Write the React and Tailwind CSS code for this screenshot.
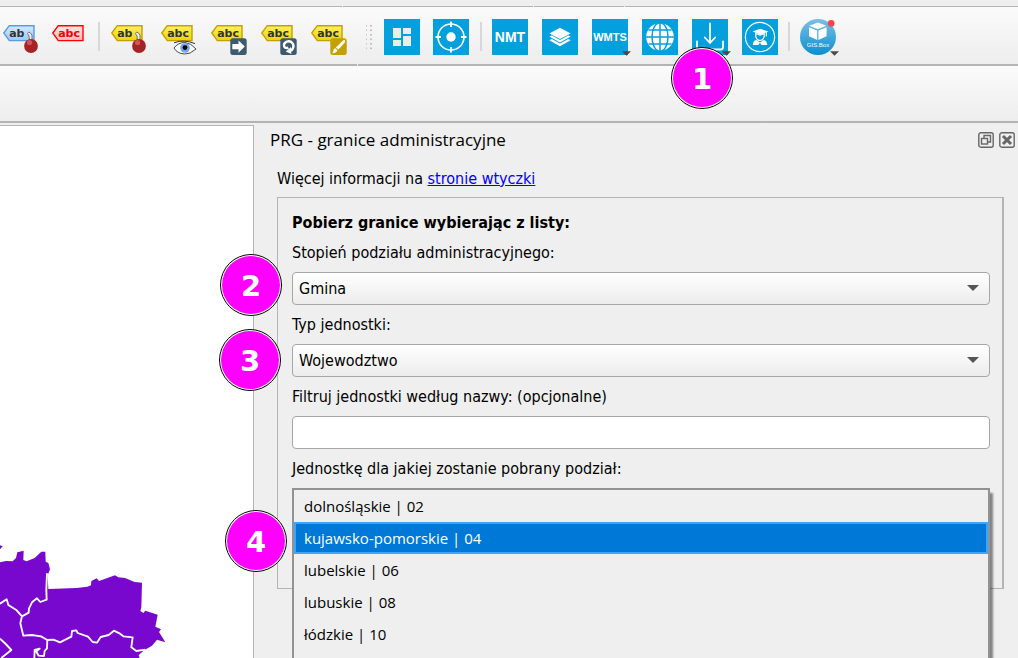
import React, { useState } from "react";

const UNITS = [
  "dolnośląskie | 02",
  "kujawsko-pomorskie | 04",
  "lubelskie | 06",
  "lubuskie | 08",
  "łódzkie | 10",
];

const TAG_COLORS = {
  blue: { stroke: "#5a9ae6", from: "#d6e9fd", to: "#9cc8f8", text: "#2e3436" },
  red: { stroke: "#ff0000", from: "#ffe9e9", to: "#ffb8b8", text: "#f00000" },
  yellow: { stroke: "#c4a000", from: "#fcf06a", to: "#ecd400", text: "#2e3436" },
};

function StepBadge({ number, className }) {
  return (
    <span
      className={`pointer-events-none absolute z-20 flex h-[62px] w-[62px] items-center justify-center rounded-full border border-black bg-white p-px ${className}`}
    >
      <span className="flex h-full w-full items-center justify-center rounded-full bg-[#ff00ff] pt-[2px] font-['DejaVu_Sans',sans-serif] text-[29px] leading-none font-bold text-white">
        {number}
      </span>
    </span>
  );
}

function Separator() {
  return <div className="mx-[10px] mt-[3px] h-[29px] w-[2px] bg-[#d8d8d8]" />;
}

function LabelTag({ color = "yellow", text = "abc", children }) {
  const c = TAG_COLORS[color];
  const id = `tag-${color}`;
  return (
    <svg viewBox="0 0 37 37" className="h-[37px] w-[37px]">
      <defs>
        <linearGradient id={id} x1="0" y1="0" x2="0" y2="1">
          <stop offset="0" stopColor={c.from} />
          <stop offset="1" stopColor={c.to} />
        </linearGradient>
      </defs>
      <path
        d="M1.8 14 L7.3 6.7 H32 V21.6 H7.3 Z"
        fill={`url(#${id})`}
        stroke={c.stroke}
        strokeWidth="1.4"
      />
      <text
        x="7.2"
        y="18.4"
        fontFamily="DejaVu Sans, sans-serif"
        fontSize="11"
        fontWeight="bold"
        fill={c.text}
      >
        {text}
      </text>
      {children}
    </svg>
  );
}

function Pin() {
  return (
    <>
      <path
        d="M25.5 14.5 Q26 12.5 28 13.5 L30 16 V22 H27.5 L27 17 Z"
        fill="#eeeeec"
        stroke="#555753"
        strokeWidth="0.8"
      />
      <circle cx="29" cy="27" r="6.9" fill="#a52225" />
      <circle cx="27.5" cy="23.5" r="2.6" fill="#d0555a" />
    </>
  );
}

function Eye() {
  return (
    <>
      <path
        d="M14 29 Q18 23.5 25 23.5 Q31 24 36 30 Q30 35.5 24.5 35 Q17 34.5 14 29 Z"
        fill="#fff"
        stroke="#333"
        strokeWidth="0.9"
      />
      <path d="M14 23.8 Q24 20 35 24.6" fill="none" stroke="#333" strokeWidth="1" />
      <circle cx="25" cy="29" r="4.8" fill="#6ea6e8" />
      <circle cx="25" cy="28.6" r="2.4" fill="#000" />
    </>
  );
}

function Corner({ fill, children }) {
  return (
    <>
      <rect x="20.3" y="19.3" width="16.4" height="16.6" rx="2.5" fill={fill} />
      {children}
    </>
  );
}

function MenuArrow({ className }) {
  return (
    <svg viewBox="0 0 10 5" className={`absolute h-[5px] w-[9px] ${className}`}>
      <path d="M0 0 H10 L5 5 Z" fill="#4a4a4a" />
    </svg>
  );
}

function Tile({ label, menu, children }) {
  return (
    <button
      type="button"
      aria-label={label}
      className="relative flex h-9 w-9 items-center justify-center bg-[#049fdd]"
    >
      {children}
      {menu && <MenuArrow className="-right-[3px] -bottom-px" />}
    </button>
  );
}

function TagButton({ label, children }) {
  return (
    <button type="button" aria-label={label} className="h-9 w-9">
      {children}
    </button>
  );
}

function Toolbar() {
  return (
    <div className="flex h-[57px] items-start bg-gradient-to-b from-[#fbfbfb] to-[#ededed] pt-3 pl-[2px]">
      <div className="flex gap-[13px]">
        <TagButton label="Etykiety">
          <LabelTag color="blue" text="ab">
            <Pin />
          </LabelTag>
        </TagButton>
        <TagButton label="Nieumieszczone etykiety">
          <LabelTag color="red" />
        </TagButton>
      </div>

      <div className="ml-px flex">
        <Separator />
      </div>

      <div className="flex gap-[14px]">
        <TagButton label="Przypnij etykiety">
          <LabelTag text="ab">
            <Pin />
          </LabelTag>
        </TagButton>
        <TagButton label="Pokaż etykiety">
          <LabelTag>
            <Eye />
          </LabelTag>
        </TagButton>
        <TagButton label="Przesuń etykietę">
          <LabelTag>
            <Corner fill="#3c5a70">
              <path d="M22.3 25 H28.5 V21.5 L34.8 27.6 L28.5 33.8 V30.3 H22.3 Z" fill="#fff" />
            </Corner>
          </LabelTag>
        </TagButton>
        <TagButton label="Obróć etykietę">
          <LabelTag>
            <Corner fill="#3c5a70">
              <path
                d="M31 31.8 Q34.5 28.5 33 25 Q30.8 21.3 26.8 22.6 Q23.2 24.2 24.2 27.5 Q25.5 30 28.3 28.6"
                fill="none"
                stroke="#fff"
                strokeWidth="2.4"
              />
              <path d="M25.8 32.5 L31 28 L31.4 35 Z" fill="#fff" />
            </Corner>
          </LabelTag>
        </TagButton>
        <TagButton label="Zmień właściwości etykiety">
          <LabelTag>
            <Corner fill="#c4a000">
              <path d="M35 20.8 L34.8 23.5 L28.4 30.6 L25.9 28.6 L33 21.4 Z" fill="#fff" />
              <path d="M25.2 29.2 L27.6 31.2 Q26.5 34 22 34.2 Q23.7 32.5 23.4 31 Q23.8 29.4 25.2 29.2 Z" fill="#fff" />
            </Corner>
          </LabelTag>
        </TagButton>
      </div>

      <svg viewBox="0 0 6 26" className="mt-[6px] mr-3 ml-5 h-[26px] w-[6px]">
        {[0, 4.5, 9, 13.5, 18, 22.5].map((y) => (
          <g key={y} fill="#c0c0c0">
            <rect x="0" y={y} width="1" height="1.4" />
            <rect x="4" y={y} width="2" height="1.6" />
          </g>
        ))}
      </svg>

      <div className="flex gap-[13px]">
        <Tile label="Kompozycje">
          <svg viewBox="0 0 36 36" className="h-9 w-9" fill="#ececec">
            <rect x="9" y="9" width="8" height="10" />
            <rect x="19" y="9" width="8" height="6" />
            <rect x="9" y="21" width="8" height="6" />
            <rect x="19" y="17" width="8" height="10" />
          </svg>
        </Tile>
        <Tile label="Lokalizacja">
          <svg viewBox="0 0 36 36" className="h-9 w-9" fill="none" stroke="#fff">
            <circle cx="18" cy="18" r="13" strokeWidth="1.6" />
            <circle cx="18" cy="18" r="4.7" fill="#fff" stroke="none" />
            <path d="M18 2.5 V8 M18 28 V33.5 M2.5 18 H8 M28 18 H33.5" strokeWidth="1.9" />
          </svg>
        </Tile>
      </div>

      <div className="ml-px flex">
        <Separator />
      </div>

      <div className="flex gap-[14px]">
        <Tile>
          <span className="font-['Liberation_Sans',sans-serif] text-[14px] font-bold text-white">
            NMT
          </span>
        </Tile>
        <Tile label="Warstwy">
          <svg viewBox="0 0 36 36" className="h-9 w-9" fill="#fff">
            <path d="M18 8.8 L28.7 14.4 L18 20 L7.3 14.4 Z" />
            <path d="M7.3 17.6 L9.8 16.6 L18 21 L26.2 16.6 L28.7 17.6 L18 23.6 Z" />
            <path d="M7.3 21.2 L9.8 20 L18 24.6 L26.2 20 L28.7 21.2 L18 27.2 Z" />
          </svg>
        </Tile>
        <Tile menu>
          <span className="font-['Liberation_Sans',sans-serif] text-[11px] font-bold text-white">
            WMTS
          </span>
        </Tile>
        <Tile label="Geoportal">
          <svg viewBox="0 0 36 36" className="h-9 w-9">
            <circle cx="18" cy="18" r="13.8" fill="#fff" />
            <g fill="none" stroke="#049fdd" strokeWidth="1.5">
              <path d="M18 4 V32 M4 18 H32 M6.5 11 H29.5 M6.5 25 H29.5" />
              <ellipse cx="18" cy="18" rx="8" ry="14.2" />
            </g>
          </svg>
        </Tile>
        <div className="relative">
          <Tile label="Pobierz granice" menu>
            <svg
              viewBox="0 0 36 36"
              className="h-9 w-9"
              fill="none"
              stroke="#fff"
              strokeWidth="1.8"
              strokeLinecap="round"
              strokeLinejoin="round"
            >
              <path d="M18 4.5 V23.5 M12.8 18.5 L18 24 L23.2 18.5" />
              <path d="M5 22.5 V28 Q5 30.5 7.5 30.5 H28.5 Q31 30.5 31 28 V22.5" />
            </svg>
          </Tile>
          <StepBadge number="1" className="-left-[21px] top-7" />
        </div>
        <Tile label="Szkolenia">
          <svg viewBox="0 0 36 36" className="h-9 w-9">
            <circle cx="18" cy="18" r="14.6" fill="none" stroke="#fff" strokeWidth="1.2" />
            <path d="M18 9.7 L26.5 12.6 L18 15.6 L10.5 12.6 Z" fill="#fff" />
            <path d="M24.3 13 V17.5" stroke="#fff" strokeWidth="1.1" />
            <path
              d="M13.8 14.5 V17.5 Q14.8 21.5 18 21.5 Q21.2 21.5 22.2 17.5 V14.5 L18 16 Z"
              fill="none"
              stroke="#fff"
              strokeWidth="1.2"
            />
            <path d="M10.8 26 Q11 21.6 14.3 21 L18 23.6 L21.7 21 Q25 21.6 25.2 26 Z" fill="#fff" />
            <path d="M16.5 26 L18 23.8 L19.5 26 Z" fill="#049fdd" />
          </svg>
        </Tile>
      </div>

      <Separator />

      <button type="button" aria-label="GIS.Box" className="relative h-9 w-9">
        <svg viewBox="0 0 36 36" className="h-9 w-9">
          <defs>
            <linearGradient id="gisbox" x1="0" y1="0" x2="0" y2="1">
              <stop offset="0" stopColor="#7cbfe6" />
              <stop offset="1" stopColor="#0a8fd0" />
            </linearGradient>
          </defs>
          <circle cx="18" cy="18" r="18" fill="url(#gisbox)" />
          <path d="M17.8 3.6 L26.3 6.8 L17.8 10.2 L9.3 6.8 Z" fill="#fff" />
          <path d="M9 8.2 L17.2 11.5 V21 L9 17.2 Z" fill="#fff" />
          <path d="M26.6 8.2 L18.4 11.5 V21 L26.6 17.2 Z" fill="#fff" />
          <text
            x="18"
            y="28"
            textAnchor="middle"
            fontFamily="Liberation Sans, sans-serif"
            fontSize="6"
            fill="#fff"
          >
            GIS.Box
          </text>
          <circle cx="31.2" cy="4.4" r="3.3" fill="#f8434a" />
        </svg>
        <MenuArrow className="-right-[3px] -bottom-px" />
      </button>
    </div>
  );
}

function MapCanvas() {
  return (
    <div className="mt-[2px] flex w-[254px] shrink-0 flex-col justify-end border-t border-r border-[#b4b4b4] bg-white">
      <svg viewBox="0 0 540 384" className="h-32 w-[180px]">
        <path
          d="M0 46 L8 49 L0 58 Z M0 97 L18 93 L38 94 L48 84 L52 67 L71 62 L70 90 L80 94 L104 84 L124 65 L136 65 L137 95 L145 99 L150 118 L143 136 L145 177 L230 174 L262 170 L273 166 L274 153 L290 145 L297 153 L345 136 L355 142 L375 144 L404 156 L426 158 L424 232 L421 243 L430 249 L436 242 L473 254 L466 290 L483 298 L477 306 L496 337 L471 329 L456 347 L430 362 L416 376 L419 384 L0 384 Z"
          fill="#7908ce"
        />
        <g fill="none" stroke="#fff" strokeWidth="5.5" strokeLinejoin="round">
          <path d="M141 130 L139 180 L140 209 L121 216 L111 205 L96 217 L87 235 L86 248 L66 259" />
          <path d="M0 221 L20 208 L25 225 L50 241 L66 259 L61 280 L70 317 L95 315 L123 319 L142 330 L160 329 L180 337 L214 320 L216 303 L229 301 L233 309 L264 320 L278 336 L291 338 L302 321 L326 315 L342 302 L360 311 L370 319 L398 322 L394 352 L409 363 L436 359" />
          <path d="M142 330 L141 355 L134 363 L132 378 L116 377 L109 365 L119 356 L104 360 L103 384" />
          <path d="M0 326 L14 339 L20 345 L34 360 L4 384" />
        </g>
      </svg>
    </div>
  );
}

function ComboBox({ id, label, options, badge }) {
  return (
    <div className="mt-2">
      <label htmlFor={id} className="block h-6 leading-6">
        {label}
      </label>
      <div className="relative mt-[7px]">
        <select
          id={id}
          className="block h-[33px] w-full appearance-none rounded-[4px] border border-[#a6a6a6] bg-gradient-to-b from-white to-[#ececec] pl-[6px] outline-none"
        >
          {options.map((option) => (
            <option key={option}>{option}</option>
          ))}
        </select>
        <svg
          viewBox="0 0 12 6"
          className="pointer-events-none absolute top-[13px] right-[11px] h-[6px] w-3"
        >
          <path d="M0 0 H12 L6 6 Z" fill="#555" />
        </svg>
        {badge}
      </div>
    </div>
  );
}

function BoundariesPanel() {
  const [selected, setSelected] = useState(UNITS[1]);

  return (
    <section className="flex-1 pt-[5px] text-[16px] text-black">
      <header className="flex h-6 items-center justify-between pr-[3px] pl-4">
        <h1 className="font-['Open_Sans',sans-serif] text-[17px] leading-6">
          PRG - granice administracyjne
        </h1>
        <div className="flex gap-[5px]">
          <button type="button" aria-label="Odepnij panel">
            <svg viewBox="0 0 16 16" className="h-4 w-4" fill="none" stroke="#666" strokeWidth="1.4">
              <rect x="0.8" y="0.8" width="14.4" height="14.4" rx="2" />
              <path d="M6 6 V3.5 H12.5 V10 H10" />
              <rect x="3.5" y="6.5" width="6" height="5.5" />
            </svg>
          </button>
          <button type="button" aria-label="Zamknij panel">
            <svg viewBox="0 0 16 16" className="h-4 w-4" fill="none" stroke="#666">
              <rect x="0.8" y="0.8" width="14.4" height="14.4" rx="2" strokeWidth="1.4" />
              <path d="M4 4 L12 12 M12 4 L4 12" strokeWidth="3" />
            </svg>
          </button>
        </div>
      </header>

      <div className="mt-[15px] mr-[14px] ml-[23px] font-['DejaVu_Sans_Condensed','Noto_Sans',sans-serif]">
        <p className="h-6 leading-6">
          Więcej informacji na{" "}
          <a href="#wtyczka" className="text-[#0000ff] underline">
            stronie wtyczki
          </a>
        </p>

        <form className="mt-[6px] h-[392px] border border-r-2 border-[#b4b4b4] pt-[13px] pr-3 pl-[14px]">
          <h2 className="h-[22px] leading-6 font-bold">Pobierz granice wybierając z listy:</h2>
          <ComboBox
            id="level"
            label="Stopień podziału administracyjnego:"
            options={["Gmina", "Powiat", "Województwo"]}
            badge={<StepBadge number="2" className="-top-[18px] -left-[72px]" />}
          />
          <ComboBox
            id="unit-type"
            label="Typ jednostki:"
            options={["Wojewodztwo", "Powiat"]}
            badge={<StepBadge number="3" className="-top-[15px] -left-[73px]" />}
          />
          <div className="mt-2">
            <label htmlFor="filter" className="block h-6 leading-6">
              Filtruj jednostki według nazwy: (opcjonalne)
            </label>
            <input
              id="filter"
              type="text"
              className="mt-[7px] block h-[33px] w-full rounded-[4px] border border-[#a6a6a6] bg-white px-[6px] outline-none"
            />
          </div>
          <div className="mt-2">
            <span id="unit-label" className="block h-6 leading-6">
              Jednostkę dla jakiej zostanie pobrany podział:
            </span>
            <div className="relative mt-[7px]">
              <ul
                role="listbox"
                aria-labelledby="unit-label"
                className="absolute inset-x-0 top-0 z-10 h-[220px] border-2 border-[#929292] bg-[#efefef] font-['Open_Sans',sans-serif] text-[15px] shadow-[3px_5px_2px_rgba(0,0,0,0.45)]"
              >
                {UNITS.map((unit) => (
                  <li
                    key={unit}
                    role="option"
                    aria-selected={unit === selected}
                    onClick={() => setSelected(unit)}
                    className={`flex h-8 items-center border-2 pl-2 ${
                      unit === selected
                        ? "border-[#3ea6fa] bg-[#0078d7] text-white"
                        : "border-transparent"
                    }`}
                  >
                    {unit}
                  </li>
                ))}
              </ul>
              <StepBadge number="4" className="top-[22px] -left-[67px]" />
            </div>
          </div>
        </form>
      </div>
    </section>
  );
}

export default function App() {
  return (
    <div className="flex h-screen flex-col overflow-hidden bg-[#efefef]">
      <div className="flex h-[7px] items-end gap-px">
        <div className="h-px w-[342px] bg-[#b4b4b4]" />
        <div className="h-px w-[190px] bg-[#b4b4b4]" />
        <div className="h-px w-[90px] bg-[#b4b4b4]" />
        <div className="h-px flex-1 bg-[#b4b4b4]" />
      </div>
      <Toolbar />
      <div className="flex gap-px">
        <div className="h-[2px] w-[357px] bg-[#b4b4b4]" />
        <div className="h-[2px] flex-1 bg-[#b4b4b4]" />
      </div>
      <div className="h-[57px] border-b-2 border-[#b4b4b4] bg-gradient-to-b from-[#fbfbfb] to-[#ededed]" />
      <main className="flex min-h-0 flex-1">
        <MapCanvas />
        <BoundariesPanel />
      </main>
    </div>
  );
}
